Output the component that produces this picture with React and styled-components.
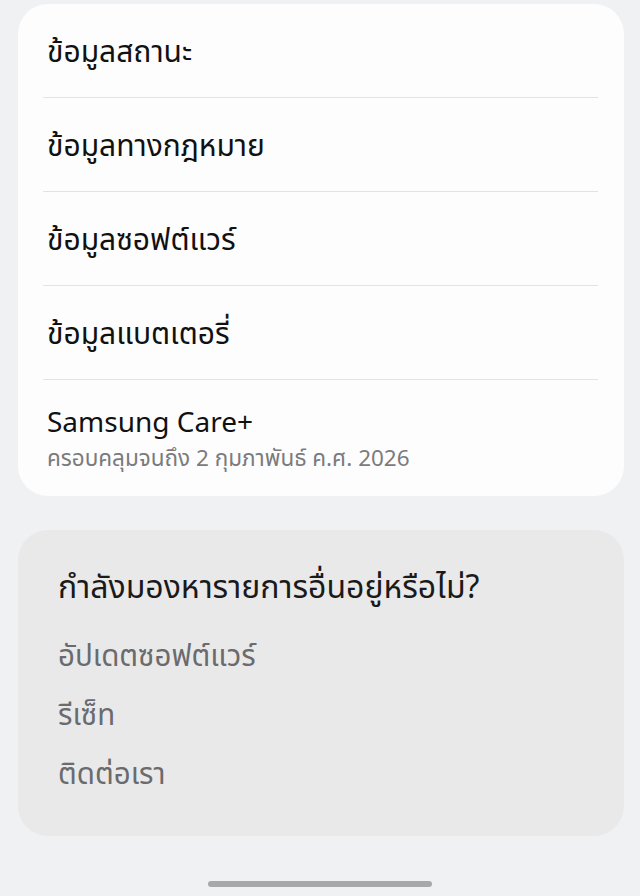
import React from "react";
import styled, { createGlobalStyle } from "styled-components";

const Global = createGlobalStyle`
  html, body { margin: 0; padding: 0; }
  body {
    background: #f0f1f3;
    font-family: "Noto Sans", "Noto Sans Thai", "DejaVu Sans", sans-serif;
    -webkit-font-smoothing: antialiased;
  }
`;

const Page = styled.div`
  width: 640px;
  height: 896px;
  box-sizing: border-box;
  padding: 4px 16px 0 18px;
  display: flex;
  flex-direction: column;
  background: #f0f1f3;
  overflow: hidden;
`;

const Card = styled.div`
  background: #fdfdfd;
  border-radius: 30px;
  padding: 0 26px 0 25px;
  display: flex;
  flex-direction: column;
`;

const Row = styled.div`
  height: ${(p) => (p.$tall ? "116px" : "94px")};
  box-sizing: border-box;
  display: flex;
  flex-direction: column;
  justify-content: center;
  padding: 0 4px;
  border-bottom: ${(p) => (p.$last ? "none" : "1px solid #e3e3e5")};
`;

const Title = styled.div`
  font-size: ${(p) => (p.$latin ? "28px" : "30px")};
  color: #111;
  line-height: 36px;
`;

const Sub = styled.div`
  font-size: 22.5px;
  color: #7b7b7d;
  line-height: 30px;
  margin-top: 4px;
`;

const Suggest = styled.div`
  margin-top: 34px;
  background: #e9e9ea;
  border-radius: 30px;
  padding: 38px 40px 45px 40px;
  display: flex;
  flex-direction: column;
  gap: 23px;
`;

const SuggestTitle = styled.div`
  font-size: 32px;
  color: #1a1a1a;
  line-height: 36px;
  margin-bottom: 10px;
`;

const Link = styled.div`
  font-size: 29.5px;
  color: #6b6b6d;
  line-height: 36px;
`;

const HomeBar = styled.div`
  margin: auto auto 9px auto;
  width: 224px;
  height: 6px;
  border-radius: 3px;
  background: #a8a8a8;
  position: relative;
  left: -1px;
`;

export default function App() {
  const rows = [
    "ข้อมูลสถานะ",
    "ข้อมูลทางกฎหมาย",
    "ข้อมูลซอฟต์แวร์",
    "ข้อมูลแบตเตอรี่",
  ];
  return (
    <>
      <Global />
      <Page>
        <Card>
          {rows.map((r) => (
            <Row key={r}>
              <Title>{r}</Title>
            </Row>
          ))}
          <Row $tall $last>
            <Title $latin>Samsung Care+</Title>
            <Sub>ครอบคลุมจนถึง 2 กุมภาพันธ์ ค.ศ. 2026</Sub>
          </Row>
        </Card>
        <Suggest>
          <SuggestTitle>กำลังมองหารายการอื่นอยู่หรือไม่?</SuggestTitle>
          <Link>อัปเดตซอฟต์แวร์</Link>
          <Link>รีเซ็ท</Link>
          <Link>ติดต่อเรา</Link>
        </Suggest>
        <HomeBar />
      </Page>
    </>
  );
}
